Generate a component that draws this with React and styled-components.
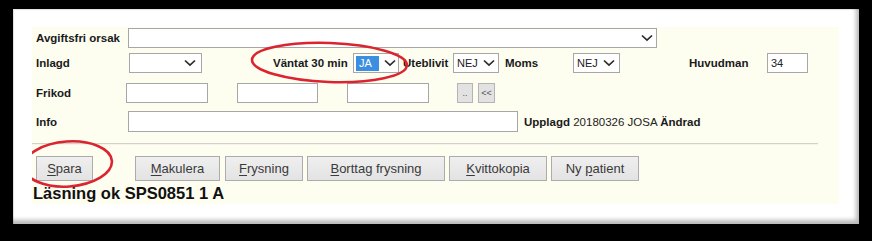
import React from "react";
import styled, { createGlobalStyle } from "styled-components";

const Global = createGlobalStyle`
  html, body { margin: 0; padding: 0; background: #000; }
  body { width: 872px; height: 241px; overflow: hidden; font-family: "Liberation Sans", Arial, sans-serif; }
`;

const Page = styled.div`
  width: 872px;
  height: 241px;
  background: #000;
  padding: 9px 0 0 13px;
  box-sizing: border-box;
`;

const Frame = styled.div`
  width: 846px;
  height: 215px;
  box-sizing: border-box;
  padding: 18px 0 0 19px;
  background: #fff;
  box-shadow: inset -3px -4px 4px rgba(0, 0, 0, 0.28), inset 1px 1px 1px rgba(0, 0, 0, 0.12);
`;

const Sheet = styled.div`
  position: relative;
  width: 807px;
  height: 177px;
  box-sizing: border-box;
  padding: 1px 0 0 4px;
  background: #fdfdf0;
  overflow: hidden;
  color: #111;
`;

const Row = styled.div`
  display: flex;
  align-items: center;
  height: ${(p) => p.$h || 20}px;
  margin-top: ${(p) => p.$mt || 0}px;
`;

const Label = styled.span`
  flex: none;
  width: ${(p) => p.$w}px;
  margin-left: ${(p) => p.$ml || 0}px;
  font-size: 11.5px;
  font-weight: bold;
  white-space: nowrap;
  color: #1a1a1a;
`;

const Box = styled.div`
  flex: none;
  box-sizing: border-box;
  width: ${(p) => p.$w}px;
  height: ${(p) => p.$h || 20}px;
  margin-left: ${(p) => p.$ml || 0}px;
  border: 1px solid #a7a7a7;
  background: #fff;
  display: flex;
  align-items: center;
  padding: 0 ${(p) => p.$pr || 4}px 0 3px;
  font-size: 11px;
  color: #222;
`;

const SelectText = styled.span`
  flex: 1;
  white-space: nowrap;
`;

const Highlight = styled.span`
  flex: none;
  width: 23px;
  height: 15px;
  margin-left: -1px;
  margin-right: 5px;
  background: #3c8fe0;
  color: #fff;
  font-size: 11px;
  line-height: 15px;
  padding-left: 3px;
  box-sizing: border-box;
`;

const Chevron = () => (
  <svg width="12" height="8" viewBox="0 0 12 8" style={{ flex: "none" }}>
    <polyline points="1,1.5 6,6.2 11,1.5" fill="none" stroke="#2b2b2b" strokeWidth="1.7" />
  </svg>
);

const MiniButton = styled.button`
  flex: none;
  box-sizing: border-box;
  width: ${(p) => p.$w}px;
  height: 20px;
  margin-left: ${(p) => p.$ml || 0}px;
  padding: 0;
  border: 1px solid #b4b4b4;
  background: #e2e2e2;
  font-family: "Liberation Sans", Arial, sans-serif;
  font-size: 9px;
  color: #555;
`;

const Meta = styled.span`
  margin-left: 6px;
  font-size: 11.5px;
  white-space: nowrap;
  color: #222;
  b { font-weight: bold; color: #1a1a1a; }
`;

const Divider = styled.div`
  width: 786px;
  margin: 11px 0 0 -4px;
  border-top: 1px solid #d2d2c6;
  border-bottom: 1px solid #f4f4ea;
`;

const ButtonBar = styled.div`
  display: flex;
  margin-top: 11px;
  height: 25px;
`;

const Button = styled.button`
  flex: none;
  box-sizing: border-box;
  width: ${(p) => p.$w}px;
  height: 25px;
  margin-left: ${(p) => p.$ml || 0}px;
  padding: 0;
  border: 1px solid #acacac;
  background: linear-gradient(#efefef, #e3e3e3);
  font-family: "Liberation Sans", Arial, sans-serif;
  font-size: 13px;
  color: #3a3a3a;
  u { text-decoration: underline; text-underline-offset: 2px; }
`;

const Status = styled.div`
  margin-top: 3px;
  margin-left: -3px;
  font-size: 16.5px;
  line-height: 19px;
  font-weight: bold;
  color: #111;
  white-space: nowrap;
`;

const Marks = styled.svg`
  position: absolute;
  left: 0;
  top: 0;
  width: 807px;
  height: 177px;
  pointer-events: none;
`;

export default function App() {
  return (
    <Page>
      <Global />
      <Frame>
        <Sheet>
          <Row>
            <Label $w={92}>Avgiftsfri orsak</Label>
            <Box $w={529} $pr={3}>
              <SelectText />
              <Chevron />
            </Box>
          </Row>
          <Row $mt={5}>
            <Label $w={93}>Inlagd</Label>
            <Box $w={73} $pr={5}>
              <SelectText />
              <Chevron />
            </Box>
            <Label $w={80} $ml={71}>Väntat 30 min</Label>
            <Box $w={46} $pr={3}>
              <Highlight>JA</Highlight>
              <Chevron />
            </Box>
            <Label $w={50} $ml={4}>Uteblivit</Label>
            <Box $w={46} $pr={3}>
              <SelectText>NEJ</SelectText>
              <Chevron />
            </Box>
            <Label $w={68} $ml={6}>Moms</Label>
            <Box $w={47} $pr={4}>
              <SelectText>NEJ</SelectText>
              <Chevron />
            </Box>
            <Label $w={78} $ml={69}>Huvudman</Label>
            <Box $w={41}>34</Box>
          </Row>
          <Row $mt={10}>
            <Label $w={90}>Frikod</Label>
            <Box $w={82} />
            <Box $w={81} $ml={29} />
            <Box $w={82} $ml={29} />
            <MiniButton $w={16} $ml={28}>..</MiniButton>
            <MiniButton $w={17} $ml={5}>&lt;&lt;</MiniButton>
          </Row>
          <Row $mt={8} $h={21}>
            <Label $w={92}>Info</Label>
            <Box $w={390} $h={21} />
            <Meta>
              <b>Upplagd</b> 20180326 JOSA <b>Ändrad</b>
            </Meta>
          </Row>
          <Divider />
          <ButtonBar>
            <Button $w={57}><u>S</u>para</Button>
            <Button $w={85} $ml={42}><u>M</u>akulera</Button>
            <Button $w={78} $ml={5}><u>F</u>rysning</Button>
            <Button $w={138} $ml={4}><u>B</u>orttag frysning</Button>
            <Button $w={98} $ml={4}><u>K</u>vittokopia</Button>
            <Button $w={88} $ml={4}>Ny <u>p</u>atient</Button>
          </ButtonBar>
          <Status>Läsning ok SPS0851 1 A</Status>
          <Marks viewBox="0 0 807 177">
            <ellipse cx="297.5" cy="35.5" rx="77.5" ry="19.5" transform="rotate(2 297.5 35.5)" fill="none" stroke="#dc2330" strokeWidth="2.6" />
            <ellipse cx="36" cy="137" rx="44" ry="22.5" transform="rotate(-4 36 137)" fill="none" stroke="#dc2330" strokeWidth="2.6" />
          </Marks>
        </Sheet>
      </Frame>
    </Page>
  );
}
